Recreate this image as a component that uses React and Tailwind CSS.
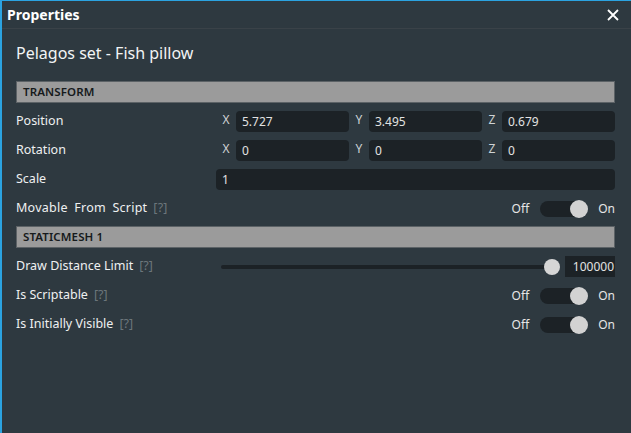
const Help = () => <span className="ml-1.5 text-[#6c767b]">[?]</span>;

const Toggle = () => (
  <div className="flex items-center text-[12px] text-[#e6e6e6]">
    <span className="mr-[11px]">Off</span>
    <div className="relative w-[47px] h-[16px] rounded-full bg-[#1c2226]">
      <div className="absolute right-[-1px] top-[-1px] w-[18px] h-[18px] rounded-full bg-[#d2d2d2]" />
    </div>
    <span className="ml-[11px]">On</span>
  </div>
);

const Field = ({ value }) => (
  <div className="flex-1 h-[21px] rounded-sm bg-[#1c2226] flex items-center px-[6px] text-[12px] text-[#e2e2e2]">
    {value}
  </div>
);

const Vec = ({ values }) => (
  <div className="grid grid-cols-3 flex-1">
    {['X', 'Y', 'Z'].map((axis, i) => (
      <div key={axis} className="flex items-center">
        <span className="w-[20px] text-center text-[12px] text-[#cfd3d5] -mt-[3px]">{axis}</span>
        <Field value={values[i]} />
      </div>
    ))}
  </div>
);

const Row = ({ label, children }) => (
  <div className="flex items-center h-[29px]">
    <div className="w-[200px] text-[12.5px] text-[#eef0f1]">{label}</div>
    <div className="flex-1 flex items-center justify-end">{children}</div>
  </div>
);

const Section = ({ title }) => (
  <div className="h-[22px] bg-[#9b9b9b] border border-[#5c6266] flex items-center px-[6px] text-[11.5px] font-semibold tracking-[0.01em] text-[#161a1c]">
    {title}
  </div>
);

export default function App() {
  return (
    <div
      className="w-[631px] h-[433px] bg-[#2e3940] border-t border-l-2 border-[#2ba3e1] flex flex-col overflow-hidden"
      style={{ fontFamily: '"Noto Sans", "Open Sans", sans-serif' }}
    >
      <div className="h-[28px] shrink-0 flex items-center justify-between pl-[5px] pr-[12px] border-b border-[#3a4248]">
        <span className="text-[14px] font-bold text-white">Properties</span>
        <svg width="12" height="12" viewBox="0 0 12 12" className="text-white">
          <path d="M1 1 L11 11 M11 1 L1 11" stroke="currentColor" strokeWidth="1.8" />
        </svg>
      </div>
      <div className="flex-1 pl-[14px] pr-[16px]">
        <h1 className="mt-[13px] h-[22px] text-[16px] leading-[22px] text-[#f2f4f5]">Pelagos set - Fish pillow</h1>
        <div className="mt-[17px]">
          <Section title="TRANSFORM" />
        </div>
        <div className="mt-[4px]">
          <Row label="Position">
            <Vec values={['5.727', '3.495', '0.679']} />
          </Row>
          <Row label="Rotation">
            <Vec values={['0', '0', '0']} />
          </Row>
          <Row label="Scale">
            <Field value="1" />
          </Row>
          <Row label={<span className="tracking-[0.02em] [word-spacing:3px]">Movable From Script<Help /></span>}>
            <Toggle />
          </Row>
        </div>
        <div className="mt-[3px]">
          <Section title="STATICMESH 1" />
        </div>
        <div className="mt-[4px]">
          <Row label={<span>Draw Distance Limit<Help /></span>}>
            <div className="flex-1 flex items-center pl-[5px]">
              <div className="relative flex-1 h-[4px] rounded-full bg-[#1c2226] mr-[10px]">
                <div className="absolute right-[-5px] top-[-6px] w-[16px] h-[16px] rounded-full bg-[#d6d6d6]" />
              </div>
              <div className="w-[50px] h-[21px] bg-[#1c2226] flex items-center justify-end pr-[1px] text-[12px] text-[#e2e2e2]">
                100000
              </div>
            </div>
          </Row>
          <Row label={<span>Is Scriptable<Help /></span>}>
            <Toggle />
          </Row>
          <Row label={<span>Is Initially Visible<Help /></span>}>
            <Toggle />
          </Row>
        </div>
      </div>
    </div>
  );
}
